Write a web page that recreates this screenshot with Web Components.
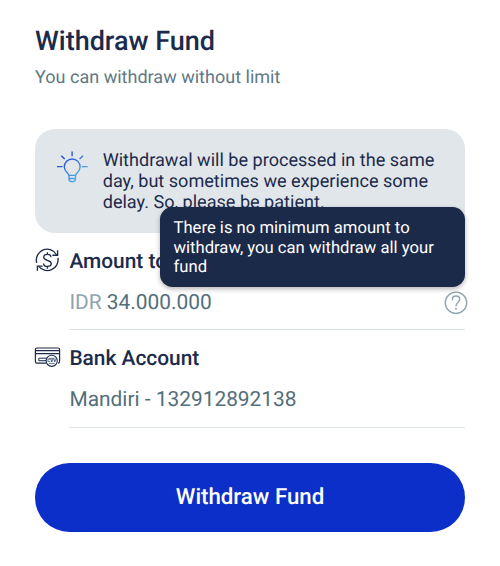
<!DOCTYPE html>
<html lang="en">
<head>
<meta charset="utf-8">
<title>Withdraw Fund</title>
<style>
html,body{margin:0;background:#fff}
body{font-family:Roboto,"Liberation Sans",sans-serif;color:#1c2b4b;text-rendering:geometricPrecision}
.currency{color:#90a4ae}
</style>
</head>
<body>
<withdraw-page>
  <page-heading slot="heading">Withdraw Fund<span slot="sub">You can withdraw without limit</span></page-heading>
  <info-notice>Withdrawal will be processed in the same day, but sometimes we experience some delay. So, please be patient.</info-notice>
  <field-row style="--inset:15.7px">
    <icon-exchange slot="icon"></icon-exchange>
    <span slot="label">Amount to</span>
    <span slot="value"><span class="currency">IDR</span> 34.000.000</span>
    <help-tip slot="extra">There is no minimum amount to withdraw, you can withdraw all your fund</help-tip>
  </field-row>
  <field-row>
    <icon-card slot="icon"></icon-card>
    <span slot="label">Bank Account</span>
    <span slot="value">Mandiri - 132912892138</span>
  </field-row>
  <pill-button>Withdraw Fund</pill-button>
</withdraw-page>
<script>
const define = (name, html) => customElements.define(name, class extends HTMLElement {
  constructor() {
    super();
    this.attachShadow({mode: 'open'}).innerHTML = html;
  }
});

define('withdraw-page', `
<style>
:host{display:flex;flex-direction:column;box-sizing:border-box;width:500px;height:566px;padding:25px 35px 0;overflow:hidden}
</style>
<slot name="heading"></slot><slot></slot>`);

define('page-heading', `
<style>
:host{display:block;height:104.3px}
h1{margin:0;font-size:27px;line-height:32px;font-weight:500}
p{margin:10px 0 0;font-size:18.05px;line-height:22px;color:#607985}
</style>
<h1><slot></slot></h1><p><slot name="sub"></slot></p>`);

define('info-notice', `
<style>
:host{display:flex;box-sizing:border-box;height:104.2px;padding:21.700px 20px 0 22px;border-radius:20px;background:#e1e6ea;font-size:18.080px;line-height:20.750px}
svg{flex:none}
p{margin:.400px 0 0 14.7px;width:346px}
</style>
<svg width="31" height="32" viewBox="57 151 31 32" fill="none" stroke="url(#g)" stroke-width="1.35">
<defs><linearGradient id="g" gradientUnits="userSpaceOnUse" x1="63" y1="159" x2="80" y2="178"><stop stop-color="#2447d2"/><stop offset="1" stop-color="#56b6e2"/></linearGradient></defs>
<path d="M69 175.300C69 173.600 64.300 172 64.300 166.900a7.900 7.900 0 0 1 15.800 0C80.100 172 75.500 173.600 75.500 175.300z"/>
<path d="M69 175.300v3.600q0 2.800 3.250 2.800t3.250-2.800v-3.600M69 178.500h6.500"/>
<path d="M72.100 151.600v4.600M61.300 155.800l3.400 3.300M83 155.800l-3.400 3.300"/>
<path d="M57 166.600h5v.1h-5zM82.200 166.600h5v.1h-5z" stroke-width="1.1"/>
</svg>
<p><slot></slot></p>`);

define('icon-exchange', `
<style>:host{display:block}svg{display:block}</style>
<svg width="26" height="26" viewBox="34.900 247.500 26 26" fill="none" stroke="#1c2b4b" stroke-width="1.350">
<path d="M36.600 262.300A10.800 10.800 0 0 1 56.600 254.500M57.800 257.300A10.800 10.800 0 0 1 38.500 265.700"/>
<path d="M57.500 249.800v4.900h-5.200M37.300 270.300v-4.700h5.200"/>
<path d="M50.900 256.800c0-1.900-1.500-2.900-3.600-2.900s-3.700 1-3.700 2.900c0 3.800 7.500 2.300 7.500 6.200 0 1.900-1.700 2.900-3.800 2.900s-3.800-1.100-3.800-3M47.300 251.800v2.100M47.300 265.900v2.300"/>
</svg>`);

define('icon-card', `
<style>:host{display:block}svg{display:block}text{font:700 4.600px Roboto,"Liberation Sans",sans-serif}</style>
<svg width="26" height="26" viewBox="35 344.700 26 26" fill="none" stroke="#1c2b4b" stroke-width="1.200" overflow="visible">
<path d="M46 362.900H37q-1.600 0-1.600-1.600v-12q0-1.600 1.600-1.600H58q1.600 0 1.600 1.600v12q0 1.600-1.600 1.600"/>
<path d="M35.400 350.300h24.200M35.400 353.300h24.200" stroke-width="1.1"/>
<path d="M46 360.400H38.800v-2.500h8.300" stroke-width="1"/>
<circle cx="51.700" cy="360.500" r="5.600" stroke-width="1.100"/>
<text x="51.700" y="362.100" text-anchor="middle" fill="#1c2b4b" stroke="none">CVV</text>
<path d="M48.800 358h5.800M48.800 363.100h5.800" stroke-width=".7"/>
</svg>`);

define('field-row', `
<style>
:host{display:grid;grid-template-columns:26px 1fr auto;column-gap:8.4px;grid-template-rows:26px 26px;row-gap:15px;height:97.500px;padding-top:var(--inset,15px);box-sizing:border-box;position:relative;font-size:20.900px;line-height:26px}
:host::after{content:"";position:absolute;left:34px;right:0;bottom:.5px;height:1px;background:#dde4e8}
.i{margin-top:-.800px}
.l{font-weight:500;grid-column:2/4;white-space:nowrap}
.v{grid-column:2;grid-row:2;color:#546e7a;white-space:pre}
.e{grid-column:3;grid-row:2}
</style>
<div class="i"><slot name="icon"></slot></div><div class="l"><slot name="label"></slot></div>
<div class="v"><slot name="value"></slot></div><div class="e"><slot name="extra"></slot></div>`);

define('help-tip', `
<style>
:host{display:block;position:relative;width:24px;height:24px;margin:.500px -2.500px 0 0}
svg{display:block}
.tip{position:absolute;z-index:2;right:2.300px;bottom:27.200px;box-sizing:border-box;width:305.500px;height:80.500px;padding:12.400px 14px 0 13.800px;border-radius:12.500px;background:#1c2a4a;color:#fff;font-size:16.650px;line-height:19.500px;box-shadow:0 2px 5px rgba(0,0,0,.3)}
</style>
<svg width="24" height="24" viewBox="443.500 291 24 24" fill="none" stroke="#90a4ae" stroke-width="1.400">
<circle cx="455.500" cy="302.800" r="10.700"/>
<path d="M451.800 299.700c0-2.200 1.600-3.700 3.700-3.700s3.700 1.400 3.700 3.500c0 3-3.700 2.900-3.700 6.300" stroke-linecap="round"/>
<circle cx="455.500" cy="308.700" r="1" fill="#90a4ae" stroke="none"/>
</svg>
<div class="tip"><slot></slot></div>`);

define('pill-button', `
<style>
:host{display:block;margin-top:34.200px}
button{display:block;width:100%;height:69.500px;padding:0;border:0;border-radius:34.750px;background:#0c2fc9;color:#fff;font:500 22.250px/69px Roboto,"Liberation Sans",sans-serif;text-rendering:inherit}
</style>
<button><slot></slot></button>`);
</script>
</body>
</html>
